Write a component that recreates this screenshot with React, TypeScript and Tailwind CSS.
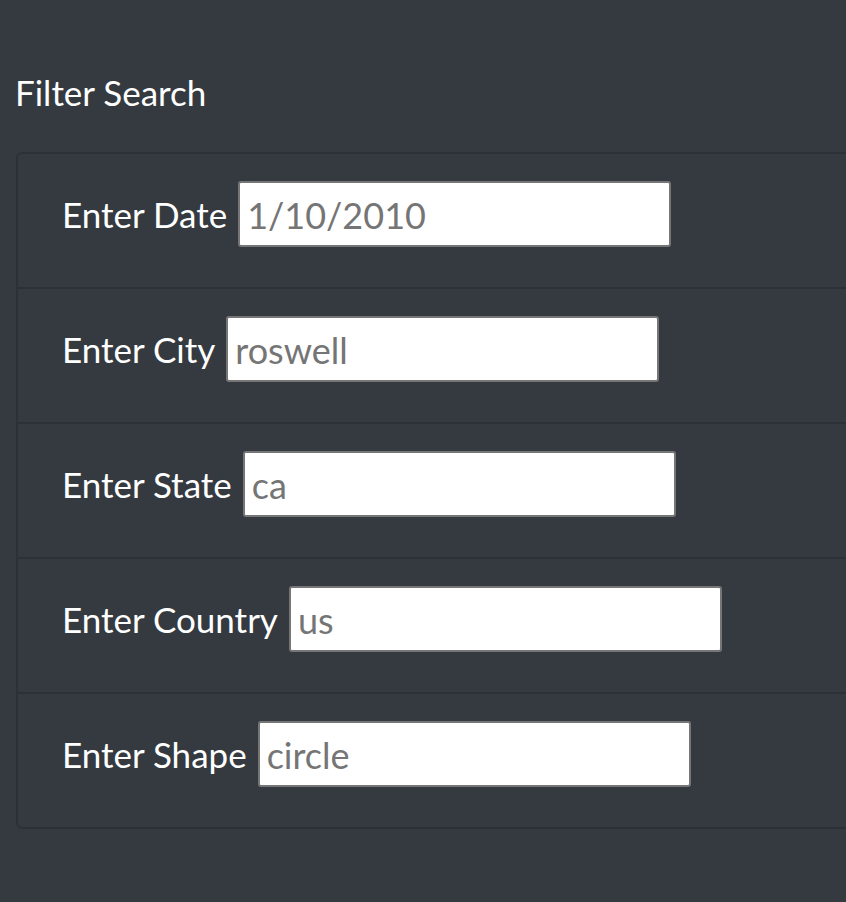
import React from 'react'

type Field = {
  label: string
  value: string
}

const fields: Field[] = [
  { label: 'Enter Date', value: '1/10/2010' },
  { label: 'Enter City', value: 'roswell' },
  { label: 'Enter State', value: 'ca' },
  { label: 'Enter Country', value: 'us' },
  { label: 'Enter Shape', value: 'circle' },
]

const FilterRow = ({ field }: { field: Field }) => (
  <li className="flex items-center pl-[44px] pt-[27px] pb-[40px]">
    <label className="text-white leading-none whitespace-nowrap">{field.label}</label>
    <input
      type="text"
      placeholder={field.value}
      className="ml-[11px] h-[66px] w-[433px] rounded-[3px] border-2 border-[#767676] bg-white px-[7px] pt-[2px] text-[36px] text-[#757575] placeholder:text-[#757575] outline-none"
    />
  </li>
)

const App = () => {
  return (
    <div
      className="min-h-[902px] w-full overflow-hidden bg-[#343a40] pt-[68px] text-[35px]"
      style={{ fontFamily: 'Lato, "Noto Sans", sans-serif' }}
    >
      <h5 className="pl-[15px] text-[35px] leading-[48px] text-white">Filter Search</h5>
      <ul className="ml-[16px] mt-[36px] w-[880px] divide-y-2 divide-[#2c3136] rounded-[6px] border-2 border-[#2c3136]">
        {fields.map((f) => (
          <FilterRow key={f.label} field={f} />
        ))}
      </ul>
    </div>
  )
}

export default App
